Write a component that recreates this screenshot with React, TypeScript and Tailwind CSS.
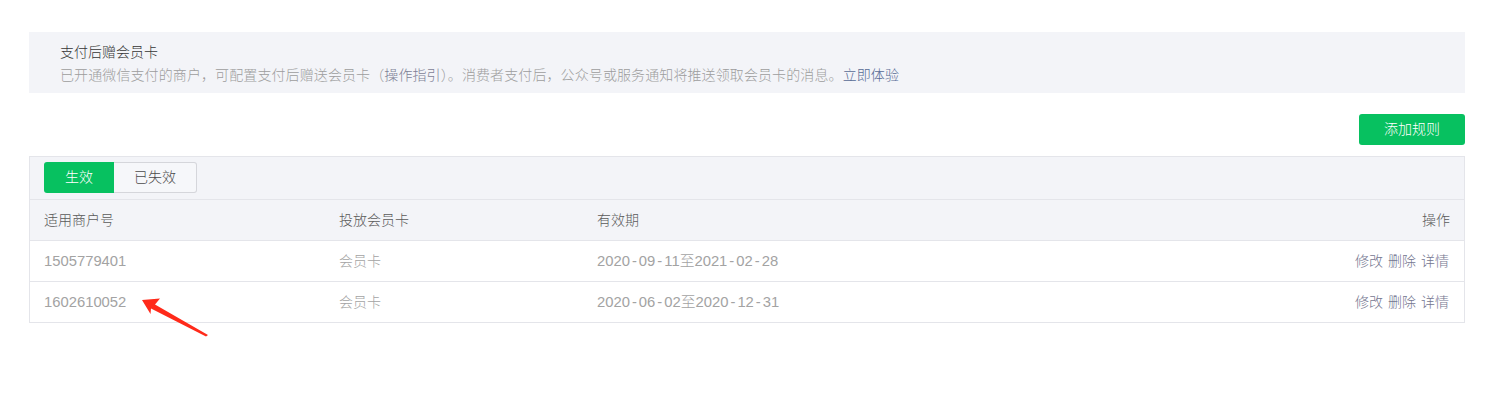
import React from "react";

const rows = [
  { id: "1505779401", card: "会员卡", period: "2020-09-11至2021-02-28" },
  { id: "1602610052", card: "会员卡", period: "2020-06-02至2020-12-31" },
];

function Period({ text }: { text: string }) {
  const parts = text.split("-");
  return (
    <span>
      {parts.map((p, i) => (
        <React.Fragment key={i}>
          {i > 0 && <span className="mx-[2px]">-</span>}
          {p}
        </React.Fragment>
      ))}
    </span>
  );
}

export default function App() {
  return (
    <div
      className="relative w-[1499px] h-[395px] bg-white pt-[32px] pl-[29px] pr-[34px]"
      style={{ fontFamily: '"Liberation Sans", "Noto Sans CJK SC", sans-serif' }}
    >
      <div className="h-[61px] bg-[#f3f4f8] pl-[31px] pt-[9px] text-[14px] leading-[23px] font-light">
        <div className="text-[#353535]">支付后赠会员卡</div>
        <div className="text-[#9d9d9d] tracking-[0.1px]">
          已开通微信支付的商户，可配置支付后赠送会员卡（<span className="text-[#7d7f95]">操作指引</span>）。消费者支付后，公众号或服务通知将推送领取会员卡的消息。
          <span className="text-[#576b95]">立即体验</span>
        </div>
      </div>

      <div className="flex justify-end mt-[21px]">
        <button className="w-[106px] h-[31px] rounded-[3px] bg-[#07c160] text-white text-[14px] leading-[31px] font-light">
          添加规则
        </button>
      </div>

      <div className="mt-[11px] border border-[#e4e5ea] bg-[#f3f4f8] font-light">
        <div className="flex pl-[14px] pt-[5px] pb-[6px]">
          <div className="flex h-[31px] text-[14px]">
            <div className="w-[70px] flex items-center justify-center bg-[#07c160] text-white rounded-l-[3px]">
              生效
            </div>
            <div className="w-[83px] flex items-center justify-center border border-l-0 border-[#d5d6db] rounded-r-[3px] text-[#4a4a4a] bg-[#f6f7fa]">
              已失效
            </div>
          </div>
        </div>
        <div className="flex items-center h-[41px] border-t border-[#e4e5ea] px-[14px] text-[14px] text-[#5a5a5a]">
          <div className="w-[295px]">适用商户号</div>
          <div className="w-[258px]">投放会员卡</div>
          <div className="flex-1">有效期</div>
          <div>操作</div>
        </div>
        {rows.map((r) => (
          <div
            key={r.id}
            className="flex items-center h-[41px] border-t border-[#e4e5ea] bg-white px-[14px] text-[14px] text-[#a3a3a3]"
          >
            <div className="w-[295px] text-[14.8px]">{r.id}</div>
            <div className="w-[258px]">{r.card}</div>
            <div className="flex-1 text-[14.8px]">
              <Period text={r.period} />
            </div>
            <div className="text-[#74768f] flex gap-[5px] pr-[1px]">
              <span>修改</span>
              <span>删除</span>
              <span>详情</span>
            </div>
          </div>
        ))}
      </div>

      <svg
        className="absolute left-[130px] top-[285px]"
        width="90"
        height="60"
        viewBox="0 0 90 60"
      >
        <polygon
          points="12,15 30,13.5 25,19.5 78,50 76,51.5 21,23.5 20.5,29"
          fill="#ff2a1a"
        />
      </svg>
    </div>
  );
}
